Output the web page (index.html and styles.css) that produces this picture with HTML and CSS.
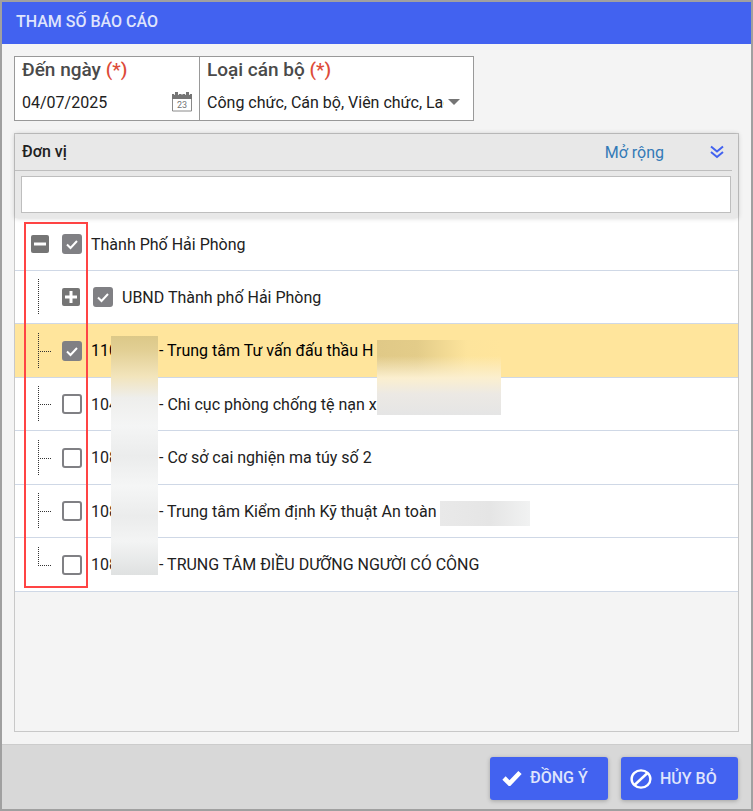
FILE: index.html
```html
<!DOCTYPE html>
<html lang="vi">
<head>
    <meta charset="UTF-8">
    <meta name="viewport" content="width=device-width, initial-scale=1.0">
    <title>Tham số báo cáo</title>
    <link rel="stylesheet" href="styles.css">
</head>
<body>
    <form class="dialog">
        <h1 class="dialog-title">THAM SỐ BÁO CÁO</h1>

        <div class="dialog-body">
            <div class="fields">
                <div class="field field-date">
                    <label for="toDate">Đến ngày <span class="required">(*)</span></label>
                    <div class="field-row">
                        <input id="toDate" type="text" value="04/07/2025">
                        <button type="button" class="icon-button" aria-label="Chọn ngày">
                            <svg width="20" height="20" viewBox="0 0 20 20">
                                <path d="M.5 5v14h19V5" fill="#fff" stroke="#8a8a8a"/>
                                <path d="M0 2h20v5H0z" fill="#757575"/>
                                <path d="M3 0h3v3H3zM14 0h3v3h-3z" fill="#757575"/>
                                <path d="M2.500 1v2M6.500 1v2M9 2h2M13.500 1v2M17.500 1v2" stroke="#fff" stroke-width=".8"/>
                                <text x="10" y="16" text-anchor="middle" class="calendar-day">23</text>
                            </svg>
                        </button>
                    </div>
                </div>
                <div class="field field-type">
                    <label for="staffType">Loại cán bộ <span class="required">(*)</span></label>
                    <div class="field-row">
                        <select id="staffType">
                            <option>Công chức, Cán bộ, Viên chức, Lao động</option>
                        </select>
                        <svg class="caret" width="12" height="6" viewBox="0 0 12 6"><path d="M0 0h12L6 6z" fill="#757575"/></svg>
                    </div>
                </div>
            </div>

            <section class="panel">
                <div class="panel-head">
                    <div class="panel-bar">
                        <label for="unitSearch">Đơn vị</label>
                        <a href="#" class="expand-link">Mở rộng</a>
                        <button type="button" class="icon-button" aria-label="Mở rộng tất cả">
                            <svg width="14" height="14" viewBox="0 0 14 14" fill="none" stroke="#4262f0" stroke-width="2">
                                <path d="M1 1.500l6 5 6-5M1 7l6 5 6-5"/>
                            </svg>
                        </button>
                    </div>
                    <input id="unitSearch" class="search" type="text">
                </div>

                <div class="tree-wrap">
                    <ul class="tree">
                        <li>
                            <span class="cell"><button type="button" class="toggle" aria-label="Thu gọn"><svg width="18" height="18"><path d="M3 9h12" stroke="#fff" stroke-width="3"/></svg></button></span>
                            <input type="checkbox" id="u1" checked>
                            <label for="u1">Thành Phố Hải Phòng</label>
                        </li>
                        <li>
                            <span class="cell branch"></span>
                            <span class="cell"><button type="button" class="toggle" aria-label="Mở rộng"><svg width="18" height="18"><path d="M3 9h12M9 3v12" stroke="#fff" stroke-width="3"/></svg></button></span>
                            <input type="checkbox" id="u2" checked>
                            <label for="u2">UBND Thành phố Hải Phòng</label>
                        </li>
                        <li class="selected">
                            <span class="cell branch tee"></span>
                            <input type="checkbox" id="u3" checked>
                            <label for="u3"><span class="code">110</span>- Trung tâm Tư vấn đấu thầu H</label>
                        </li>
                        <li>
                            <span class="cell branch tee"></span>
                            <input type="checkbox" id="u4">
                            <label for="u4"><span class="code">104</span>- Chi cục phòng chống tệ nạn x</label>
                        </li>
                        <li>
                            <span class="cell branch tee"></span>
                            <input type="checkbox" id="u5">
                            <label for="u5"><span class="code">108</span>- Cơ sở cai nghiện ma túy số 2</label>
                        </li>
                        <li>
                            <span class="cell branch tee"></span>
                            <input type="checkbox" id="u6">
                            <label for="u6"><span class="code">108</span>- Trung tâm Kiểm định Kỹ thuật An toàn</label>
                        </li>
                        <li>
                            <span class="cell branch tee last"></span>
                            <input type="checkbox" id="u7">
                            <label for="u7"><span class="code">108</span>- TRUNG TÂM ĐIỀU DƯỠNG NGƯỜI CÓ CÔNG</label>
                        </li>
                    </ul>
                    <!-- redacted parts -->
                    <div class="mask mask-codes"></div>
                    <div class="mask mask-names"></div>
                    <div class="mask mask-suffix"></div>
                    <div class="highlight"></div>
                </div>
            </section>
        </div>

        <div class="dialog-footer">
            <button type="button" class="action">
                <svg width="20" height="16" viewBox="0 0 20 16"><path d="M2 8l5.500 5.500L18 2.500" fill="none" stroke="#fff" stroke-width="4.600"/></svg>
                ĐỒNG Ý
            </button>
            <button type="button" class="action action-cancel">
                <svg width="22" height="20" viewBox="0 0 22 20" fill="none" stroke="#fff" stroke-width="2.400"><ellipse cx="11" cy="10" rx="9.400" ry="8.600"/><path d="M4.500 16L17.500 4"/></svg>
                HỦY BỎ
            </button>
        </div>
    </form>
</body>
</html>
```
FILE: styles.css
```css
:root {
    --primary: #4262f0;
    --frame: #a0a0a0;
    --panel-border: #c8c8c8;
    --row-border: #cfd8e6;
    --icon-gray: #808084;
}

* {
    box-sizing: border-box;
}

body {
    margin: 0;
    font-family: Roboto, Arial, sans-serif;
    font-size: 16px;
    color: #212121;
}

button,
input,
select {
    font: inherit;
    color: inherit;
    margin: 0;
}

.dialog {
    display: flex;
    flex-direction: column;
    min-height: 100vh;
    border: 2px solid var(--frame);
    background-color: #f4f4f4;
}

.dialog-title {
    margin: 0;
    padding: 0 14px 2px;
    font-size: 16px;
    font-weight: 500;
    line-height: 40px;
    color: #dfe4fc;
    background-color: var(--primary);
}

.dialog-body {
    flex: 1;
    display: flex;
    flex-direction: column;
    gap: 12px;
    padding: 12px;
}

/* Parameter fields */
.fields {
    display: flex;
    width: 460px;
    max-width: 100%;
    border: 1px solid #999;
    background-color: #fff;
}

.field {
    padding: 0 7px 7px;
}

.field-date {
    width: 185px;
    border-right: 1px solid #999;
}

.field-type {
    flex: 1;
    min-width: 0;
}

.field label {
    display: block;
    font-size: 19px;
    font-weight: 500;
    line-height: 26px;
    color: #4a4a4a;
}

.field label .required {
    color: #dd4b39;
}

.field-row {
    display: flex;
    align-items: center;
    height: 30px;
    padding-top: 8px;
}

.field-row input,
.field-row select {
    flex: 1;
    min-width: 0;
    height: 24px;
    padding: 0;
    border: 0;
    outline: 0;
    background: none;
    appearance: none;
}

.field-type .field-row {
    padding-right: 6px;
    gap: 4px;
}

.caret {
    flex: none;
    pointer-events: none;
}

.icon-button {
    display: flex;
    padding: 0;
    border: 0;
    background: none;
    cursor: pointer;
}

.calendar-day {
    font-size: 9px;
    fill: #757575;
}

/* Unit panel */
.panel {
    flex: 1;
    border: 1px solid var(--panel-border);
}

.panel-head {
    position: relative;
    z-index: 1;
    height: 84px;
    padding: 0 7px 0 6px;
    background-color: #e8e8e8;
    box-shadow: 0 0 5px rgba(0, 0, 0, 0.2);
}

.panel-bar {
    display: flex;
    align-items: center;
    height: 37px;
    margin: 0 -1px 5px -6px;
    padding: 0 8px 0 7px;
    border-bottom: 1px solid #bebebe;
}

.panel-bar label {
    flex: 1;
    padding-bottom: 2px;
    font-weight: 500;
}

.expand-link {
    margin-right: 46px;
    color: #337ab7;
    text-decoration: none;
}

.search {
    display: block;
    width: 100%;
    height: 37px;
    padding: 0 8px;
    border: 1px solid #bebebe;
    background-color: #fff;
}

.tree-wrap {
    position: relative;
}

.tree {
    margin: 0;
    padding: 0;
    list-style: none;
}

.tree li {
    display: flex;
    align-items: center;
    height: 53px;
    padding-left: 9px;
    border-bottom: 1px solid var(--row-border);
    background-color: #fff;
}

.tree li:nth-child(2n + 3) {
    height: 54px;
}

.tree li.selected {
    color: #000;
    background-color: #ffe59c;
}

.tree label {
    padding-left: 9px;
    white-space: nowrap;
}

.code {
    display: inline-block;
    width: 68px;
}

.cell {
    display: flex;
    flex: none;
    justify-content: center;
    width: 31px;
}

.cell + input {
    margin-left: 7px;
}

.branch {
    height: 36px;
    background-image: repeating-linear-gradient(#333 0 1px, transparent 1px 2px);
    background-size: 1px 100%;
    background-position: 14px 0;
    background-repeat: no-repeat;
}

.tee {
    background-image:
        repeating-linear-gradient(#333 0 1px, transparent 1px 2px),
        repeating-linear-gradient(90deg, #333 0 1px, transparent 1px 2px);
    background-size: 1px 100%, 14px 1px;
    background-position: 14px 0, 14px 18px;
}

.last {
    background-size: 1px 19px, 14px 1px;
}

.toggle {
    display: block;
    width: 18px;
    height: 18px;
    padding: 0;
    border: 0;
    border-radius: 2px;
    background-color: #757575;
}

.toggle svg {
    display: block;
}

.tree input {
    flex: none;
    width: 20px;
    height: 20px;
    border: 2px solid var(--icon-gray);
    border-radius: 3px;
    background-color: #fff;
    appearance: none;
}

.tree input:checked {
    background: var(--icon-gray) url("data:image/svg+xml,%3Csvg xmlns='http://www.w3.org/2000/svg' viewBox='0 0 16 16'%3E%3Cpath d='M3 8.500l3.500 3.500L13 5' fill='none' stroke='%23fff' stroke-width='2'/%3E%3C/svg%3E") center / 16px no-repeat;
}

.mask {
    position: absolute;
}

.mask-codes {
    left: 96px;
    top: 118px;
    width: 47px;
    height: 239px;
    background: linear-gradient(#dcc888 0, #e2cf94 14px, #f2e4bb 40px, #eeeeec 62px, #f4f5f5 90px, #ebecec 120px, #f5f6f6 150px, #ebecec 180px, #f3f4f4 205px, #dfe1e1 100%);
}

.mask-names {
    left: 362px;
    top: 122px;
    width: 124px;
    height: 75px;
    background:
        linear-gradient(rgba(251, 239, 207, 0) 16px, #fbefcf 38px, #ece9e4 54px, #e5e5e5 100%),
        linear-gradient(90deg, #e0c987, #e3cc89 40px, #fde49c 90px, #ffe59c);
}

.mask-suffix {
    left: 425px;
    top: 283px;
    width: 90px;
    height: 25px;
    background: linear-gradient(90deg, #e9e9e9, #e5e5e5 50px, #f1f2f2);
}

/* Red frame around the tick boxes */
.highlight {
    position: absolute;
    left: 9px;
    top: 4px;
    width: 64px;
    height: 366px;
    border: 2px solid #f44;
    pointer-events: none;
}

/* Footer */
.dialog-footer {
    display: flex;
    justify-content: flex-end;
    gap: 13px;
    padding: 12px 13px 9px;
    border-top: 1px solid #ccc;
    background-color: #d8d8d8;
}

.action {
    display: flex;
    align-items: center;
    gap: 8px;
    width: 118px;
    height: 43px;
    padding: 0 12px 2px;
    border: 0;
    border-radius: 3px;
    font-weight: 500;
    color: #dfe4fc;
    background-color: var(--primary);
    box-shadow: 0 1px 4px rgba(0, 0, 0, 0.25);
    cursor: pointer;
}

.action-cancel {
    width: 117px;
    padding: 0 9px;
}
```
